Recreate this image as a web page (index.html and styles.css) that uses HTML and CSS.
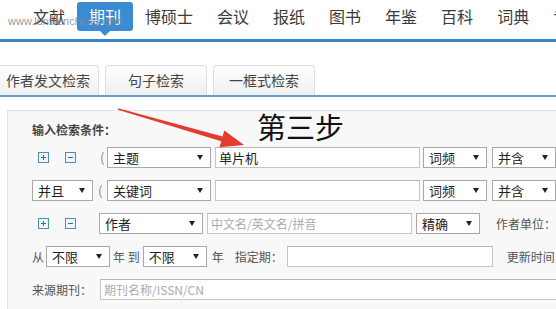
FILE: index.html
```html
<!DOCTYPE html>
<html lang="zh-CN">
<head>
	<meta charset="UTF-8">
	<title>期刊检索</title>
	<link rel="stylesheet" href="styles.css">
</head>
<body>
	<div class="topbar">
		<ul class="nav">
			<li>文献</li>
			<li class="active">期刊</li>
			<li>博硕士</li>
			<li>会议</li>
			<li>报纸</li>
			<li>图书</li>
			<li>年鉴</li>
			<li>百科</li>
			<li>词典</li>
			<li>专利</li>
		</ul>
		<div class="watermark">www.lunwencheng.com</div>
	</div>

	<div class="tabs">
		<div class="tab">作者发文检索</div>
		<div class="tab">句子检索</div>
		<div class="tab">一框式检索</div>
	</div>

	<div class="panel">
		<div class="panel-title">输入检索条件：</div>

		<div class="row">
			<span class="icon icon-first"><svg width="11" height="11" viewBox="0 0 11 11"><rect x="0.5" y="0.5" width="10" height="10" fill="#eef4f8" stroke="#4f8db5"/><path d="M3 5.5h5M5.5 3v5" stroke="#2f6f99"/></svg></span>
			<span class="icon"><svg width="11" height="11" viewBox="0 0 11 11"><rect x="0.5" y="0.5" width="10" height="10" fill="#eef4f8" stroke="#4f8db5"/><path d="M3 5.5h5" stroke="#2f6f99"/></svg></span>
			<span class="paren paren-wide">(</span>
			<div class="select w-field no-gap">主题<i class="arrow"></i></div>
			<div class="input w-text">单片机</div>
			<div class="select w-small gap-3">词频<i class="arrow"></i></div>
			<div class="select w-small gap-5">并含<i class="arrow"></i></div>
		</div>

		<div class="row">
			<div class="select w-logic no-gap">并且<i class="arrow"></i></div>
			<span class="paren">(</span>
			<div class="select w-field no-gap">关键词<i class="arrow"></i></div>
			<div class="input w-text"></div>
			<div class="select w-small gap-3">词频<i class="arrow"></i></div>
			<div class="select w-small gap-5">并含<i class="arrow"></i></div>
		</div>

		<div class="row">
			<span class="icon icon-first"><svg width="11" height="11" viewBox="0 0 11 11"><rect x="0.5" y="0.5" width="10" height="10" fill="#eef4f8" stroke="#4f8db5"/><path d="M3 5.5h5M5.5 3v5" stroke="#2f6f99"/></svg></span>
			<span class="icon"><svg width="11" height="11" viewBox="0 0 11 11"><rect x="0.5" y="0.5" width="10" height="10" fill="#eef4f8" stroke="#4f8db5"/><path d="M3 5.5h5" stroke="#2f6f99"/></svg></span>
			<div class="select w-field author">作者<i class="arrow"></i></div>
			<div class="input w-text placeholder">中文名/英文名/拼音</div>
			<div class="select w-small">精确<i class="arrow"></i></div>
			<span class="label unit">作者单位：</span>
		</div>

		<div class="row">
			<span class="label no-gap">从</span>
			<div class="select w-small gap-2">不限<i class="arrow"></i></div>
			<span class="label gap-3">年 到</span>
			<div class="select w-small gap-3">不限<i class="arrow"></i></div>
			<span class="label gap-5">年</span>
			<span class="label period">指定期：</span>
			<div class="input w-period"></div>
			<span class="label updated">更新时间</span>
		</div>

		<div class="row">
			<span class="label no-gap">来源期刊：</span>
			<div class="input w-long placeholder">期刊名称/ISSN/CN</div>
		</div>
	</div>

	<div class="step">第三步</div>
	<svg class="pointer" width="556" height="309" viewBox="0 0 556 309">
		<polygon points="118.1,108.3 222.6,136.6 224.3,130.6 244,145 219.5,147.2 221.2,141.2 117.9,109.7" fill="#e53a2e"/>
	</svg>
</body>
</html>
```

FILE: styles.css
```css
* {
	box-sizing: border-box;
}

body {
	margin: 0;
	width: 556px;
	height: 309px;
	overflow: hidden;
	position: relative;
	font-family: "Noto Sans CJK SC", "Microsoft YaHei", sans-serif;
	color: #333;
	background-color: #fff;
}

.topbar {
	position: relative;
	height: 42px;
	border-bottom: 3px solid #3787c6;
}

.nav {
	display: flex;
	list-style: none;
	margin: 0;
	padding: 2px 0 0 21px;
	white-space: nowrap;
}

.nav li {
	position: relative;
	padding: 0 12px;
	height: 29px;
	line-height: 29px;
	font-size: 16px;
	color: #3a3a3a;
	border-radius: 3px;
}

.nav li.active {
	background-color: #3b8bd3;
	color: #fff;
}

.nav li.active::after {
	content: "";
	position: absolute;
	left: 50%;
	top: 100%;
	margin-left: -5px;
	border-top: 5px solid #3b8bd3;
	border-left: 5px solid transparent;
	border-right: 5px solid transparent;
}

.watermark {
	position: absolute;
	left: 8px;
	top: 15px;
	font-family: "Liberation Sans", Arial, sans-serif;
	font-size: 11px;
	color: rgba(135, 135, 135, 0.85);
}

.tabs {
	display: flex;
	gap: 6px;
	margin-top: 23px;
	margin-left: -3px;
	border-bottom: 2px solid #6b9cc6;
	width: 600px;
}

.tab {
	width: 102px;
	height: 30px;
	line-height: 29px;
	text-align: center;
	font-size: 14px;
	color: #444;
	border: 1px solid #dedede;
	border-bottom: none;
	border-radius: 4px 4px 0 0;
	background: linear-gradient(#ffffff, #efefef);
	white-space: nowrap;
}

.panel {
	margin: 13px 0 0 7px;
	width: 700px;
	height: 260px;
	padding: 11px 0 0 24px;
	background-color: #f8f8f8;
	border: 1px solid #e2e2e2;
	border-right: none;
}

.panel-title {
	font-size: 12px;
	line-height: 16px;
	font-weight: bold;
	color: #444;
	margin-bottom: 9px;
}

.row {
	display: flex;
	align-items: center;
	height: 21px;
	margin-bottom: 12px;
	white-space: nowrap;
}

.icon {
	display: flex;
	margin-left: 16px;
}

.icon-first {
	margin-left: 6px;
}

.paren {
	width: 9px;
	margin-left: 5px;
	font-size: 13px;
	color: #888;
}

.paren-wide {
	margin-left: 24px;
	width: 7px;
}

.select {
	position: relative;
	height: 21px;
	line-height: 19px;
	padding-left: 5px;
	font-size: 13px;
	color: #222;
	background-color: #fff;
	border: 1px solid #a8a8a8;
	margin-left: 4px;
}

.arrow {
	position: absolute;
	right: 7px;
	top: 7px;
	border-top: 5px solid #222;
	border-left: 3px solid transparent;
	border-right: 3px solid transparent;
}

.input {
	height: 21px;
	line-height: 19px;
	padding-left: 3px;
	font-size: 13px;
	color: #222;
	background-color: #fff;
	border: 1px solid #c6c6c6;
	border-top-color: #b5b5b5;
	margin-left: 4px;
}

.placeholder {
	font-size: 12px;
	color: #aaa;
}

.w-field {
	width: 104px;
}

.w-text {
	width: 205px;
}

.w-period {
	width: 206px;
	margin-left: 4px;
}

.w-small {
	width: 64px;
}

.w-logic {
	width: 61px;
}

.w-long {
	width: 500px;
	margin-left: 8px;
}

.author {
	margin-left: 23px;
}

.label {
	font-size: 12px;
	color: #555;
	margin-left: 4px;
}

.unit {
	margin-left: 16px;
}

.period {
	margin-left: 11px;
}

.updated {
	margin-left: 14px;
}

.no-gap {
	margin-left: 0;
}

.gap-2 {
	margin-left: 2px;
}

.gap-3 {
	margin-left: 3px;
}

.gap-5 {
	margin-left: 5px;
}

.step {
	position: absolute;
	left: 257px;
	top: 109px;
	font-size: 29px;
	line-height: 34px;
	color: #111;
}

.pointer {
	position: absolute;
	left: 0;
	top: 0;
	pointer-events: none;
}
```
